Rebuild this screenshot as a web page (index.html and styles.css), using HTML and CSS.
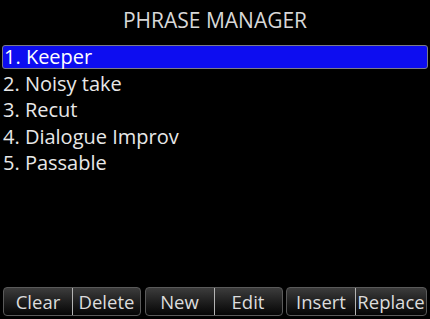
FILE: index.html
```html
<!DOCTYPE html>
<html lang="en">
<head>
    <meta charset="UTF-8">
    <title>Phrase Manager</title>
    <link rel="stylesheet" href="styles.css">
</head>
<body>
    <div class="screen">
        <h1 class="title">PHRASE MANAGER</h1>

        <ul class="phrase-list">
            <li class="phrase selected">1. Keeper</li>
            <li class="phrase">2. Noisy take</li>
            <li class="phrase">3. Recut</li>
            <li class="phrase">4. Dialogue Improv</li>
            <li class="phrase">5. Passable</li>
        </ul>

        <div class="softkeys">
            <div class="key-pair">
                <button class="key">Clear</button>
                <button class="key">Delete</button>
            </div>
            <div class="key-pair">
                <button class="key">New</button>
                <button class="key">Edit</button>
            </div>
            <div class="key-pair">
                <button class="key">Insert</button>
                <button class="key">Replace</button>
            </div>
        </div>
    </div>
</body>
</html>
```

FILE: styles.css
```css
body {
    margin: 0;
    background: #000;
    font-family: 'Open Sans', 'Noto Sans', sans-serif;
    color: #e6e6e6;
}

.screen {
    width: 430px;
    height: 319px;
    display: flex;
    flex-direction: column;
}

.title {
    margin: 0;
    padding-top: 6px;
    height: 37px;
    box-sizing: border-box;
    text-align: center;
    font-size: 21px;
    font-weight: normal;
    line-height: 28px;
    color: #d8d8d8;
}

.phrase-list {
    list-style: none;
    margin: 0;
    padding: 8px 2px 0;
    flex: 1;
}

.phrase {
    height: 26.5px;
    line-height: 24px;
    font-size: 20px;
    padding-left: 1px;
    color: #e8e8e8;
    box-sizing: border-box;
}

/* selected row: blue bar with grey rim */
.phrase.selected {
    height: 24px;
    margin-bottom: 2.5px;
    line-height: 22px;
    background: #0d0df0;
    border: 1px solid #7a7a8a;
    border-radius: 3px;
    color: #fff;
}

.softkeys {
    display: flex;
    justify-content: space-between;
    padding: 0 3px 3px 3px;
}

.key-pair {
    display: flex;
    height: 29px;
    border: 1px solid #5a5a5a;
    border-radius: 4px;
    overflow: hidden;
    box-sizing: border-box;
    background: linear-gradient(#3c3c3c, #1a1a1a 60%, #050505);
}

.key {
    background: none;
    border: none;
    padding: 0;
    width: 68px;
    font-family: inherit;
    font-size: 18.5px;
    color: #dcdcdc;
    line-height: 26px;
    white-space: nowrap;
}

.key + .key {
    border-left: 1px solid #b4b4b4;
}

.key-pair:last-child .key:last-child {
    width: 71px;
}
```
